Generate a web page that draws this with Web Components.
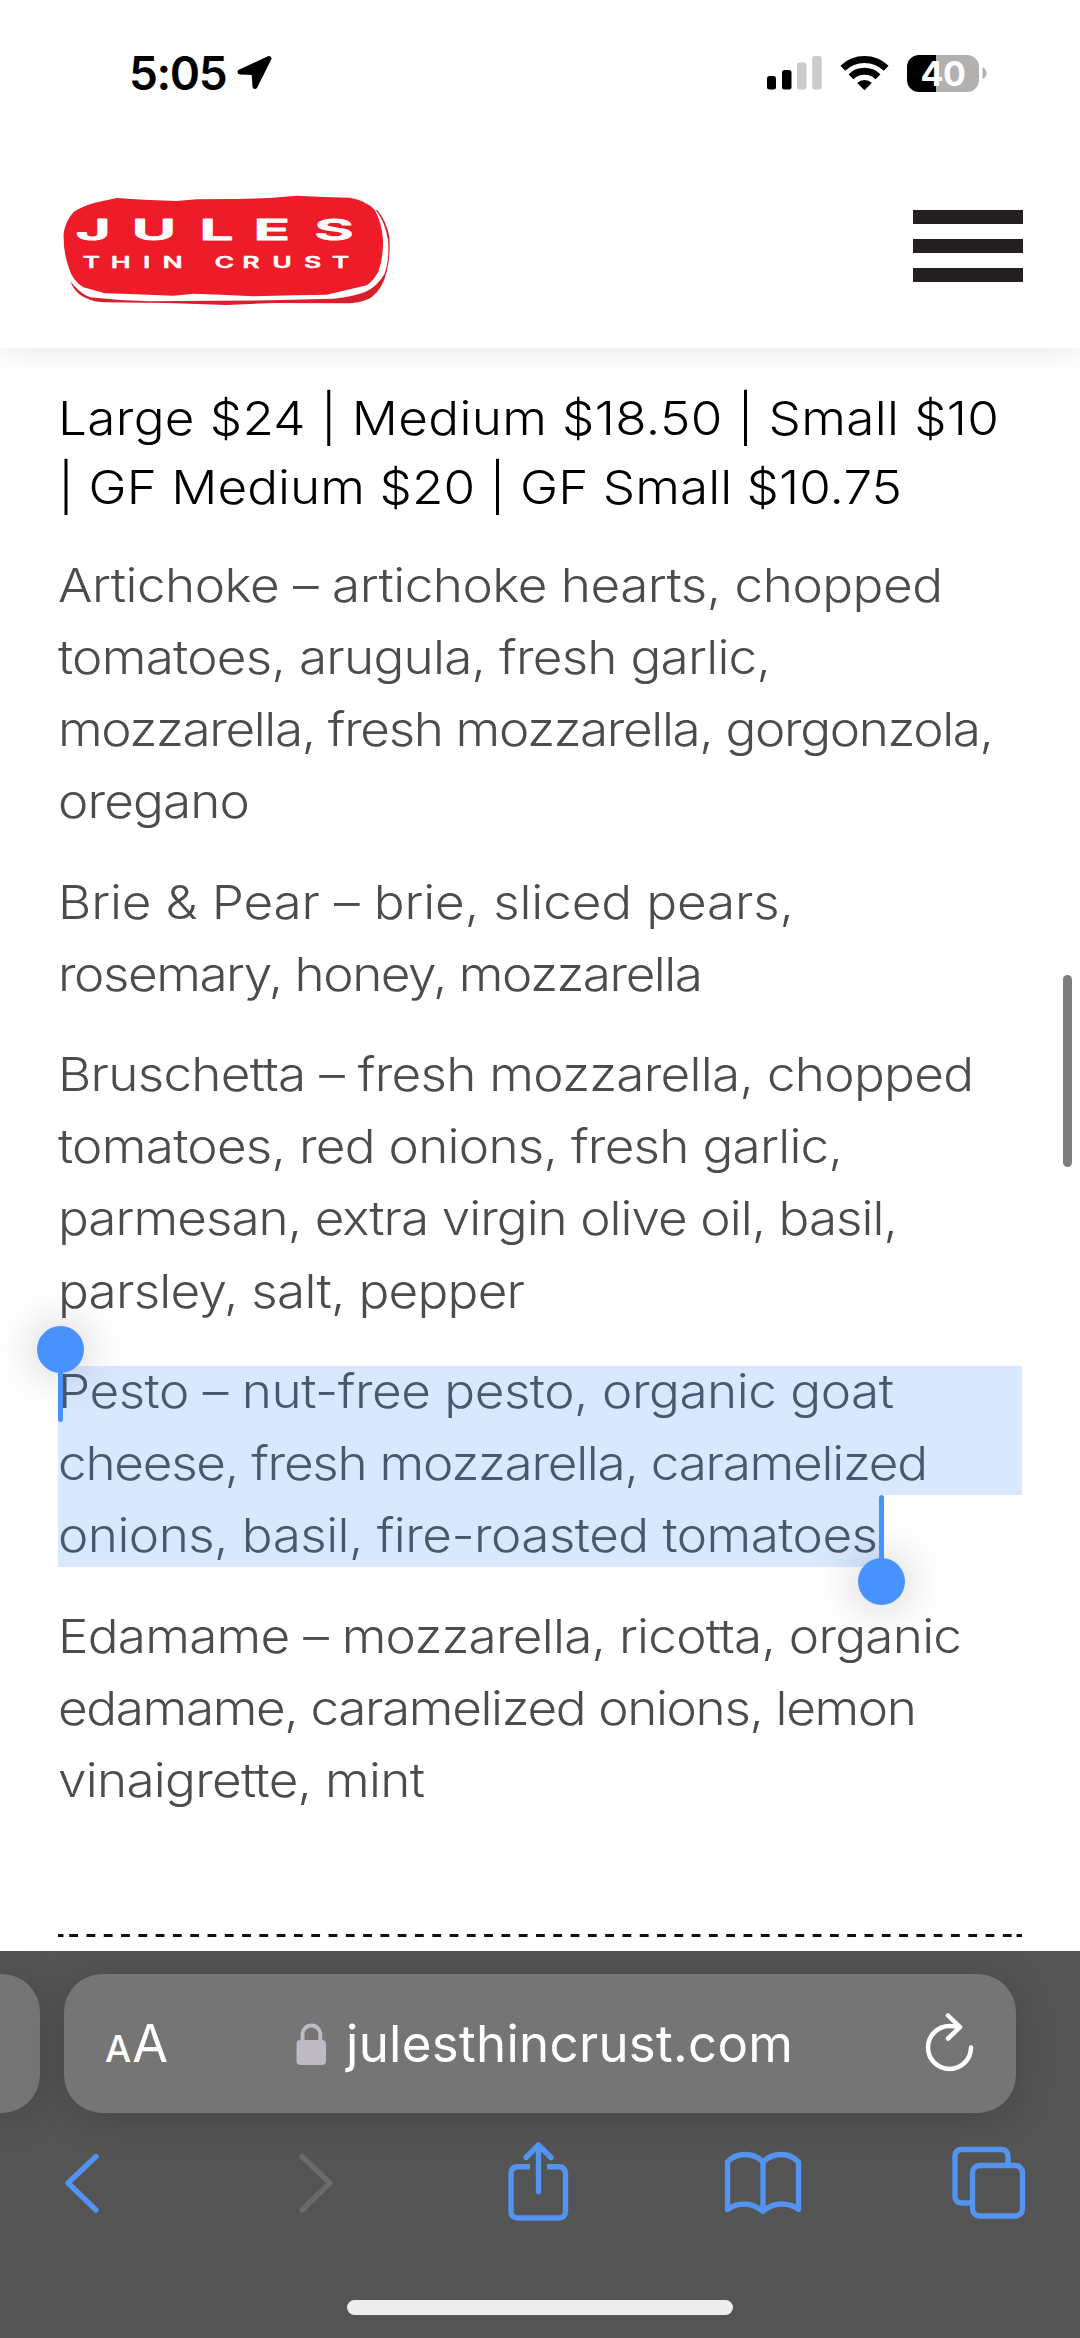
<!DOCTYPE html>
<html lang="en">
<head>
<meta charset="utf-8">
<title>Jules Thin Crust</title>
<style>
    body{
        margin: 0;
        width: 1080px;
        height: 2338px;
        overflow: hidden;
        background: #fff;
        font-family: Inter, "Liberation Sans", sans-serif;
    }
</style>
</head>
<body>
<phone-screen>
    <status-bar slot="top" time="5:05" battery="40"></status-bar>
    <site-header slot="top"></site-header>
    <menu-heading>
        <fit-line width="941" stretch="1.09">Large $24 | Medium $18.50 | Small $10</fit-line>
        <fit-line width="844" stretch="1.09">| GF Medium $20 | GF Small $10.75</fit-line>
    </menu-heading>
    <menu-item>
        <fit-line width="885" stretch="1.09">Artichoke – artichoke hearts, chopped</fit-line>
        <fit-line width="713" stretch="1.09">tomatoes, arugula, fresh garlic,</fit-line>
        <fit-line width="936" stretch="1.09">mozzarella, fresh mozzarella, gorgonzola,</fit-line>
        <fit-line width="192" stretch="1.09">oregano</fit-line>
    </menu-item>
    <menu-item>
        <fit-line width="736" stretch="1.09">Brie &amp; Pear – brie, sliced pears,</fit-line>
        <fit-line width="645" stretch="1.09">rosemary, honey, mozzarella</fit-line>
    </menu-item>
    <menu-item>
        <fit-line width="916" stretch="1.09">Bruschetta – fresh mozzarella, chopped</fit-line>
        <fit-line width="785" stretch="1.09">tomatoes, red onions, fresh garlic,</fit-line>
        <fit-line width="840" stretch="1.09">parmesan, extra virgin olive oil, basil,</fit-line>
        <fit-line width="467" stretch="1.09">parsley, salt, pepper</fit-line>
    </menu-item>
    <menu-item selected>
        <fit-line width="836" stretch="1.09">Pesto – nut-free pesto, organic goat</fit-line>
        <fit-line width="870" stretch="1.09">cheese, fresh mozzarella, caramelized</fit-line>
        <fit-line width="820" stretch="1.09">onions, basil, fire-roasted tomatoes</fit-line>
    </menu-item>
    <menu-item>
        <fit-line width="904" stretch="1.09">Edamame – mozzarella, ricotta, organic</fit-line>
        <fit-line width="859" stretch="1.09">edamame, caramelized onions, lemon</fit-line>
        <fit-line width="367" stretch="1.09">vinaigrette, mint</fit-line>
    </menu-item>
    <dashed-rule></dashed-rule>
    <browser-bar slot="bottom"><fit-line width="447">julesthincrust.com</fit-line></browser-bar>
</phone-screen>

<script>
class PhoneScreen extends HTMLElement{
    constructor(){
        super()
        this.attachShadow({mode: 'open'})
        this.shadowRoot.innerHTML = `
            <style>
                :host{
                    position: relative;
                    display: flex;
                    flex-direction: column;
                    width: 1080px;
                    height: 2338px;
                    overflow: hidden;
                }
                main{
                    flex: 1;
                    min-height: 0;
                    padding: 34.5px 58px 0;
                    overflow: hidden;
                }
                #scroll{
                    position: absolute;
                    top: 975px;
                    right: 8px;
                    width: 9px;
                    height: 192px;
                    border-radius: 5px;
                    background: #7f7f7f;
                }
            </style>
            <slot name="top"></slot>
            <main><slot></slot></main>
            <slot name="bottom"></slot>
            <div id="scroll"></div>
        `
    }
}

class StatusBar extends HTMLElement{
    constructor(){
        super()
        this.attachShadow({mode: 'open'})
        this.shadowRoot.innerHTML = `
            <style>
                :host{
                    display: flex;
                    justify-content: space-between;
                    align-items: flex-start;
                    box-sizing: border-box;
                    height: 150px;
                    padding: 46px 92px 0 129px;
                }
                div{
                    display: flex;
                    align-items: center;
                    height: 54px;
                }
                #time{
                    font-size: 46px;
                    font-weight: 600;
                    letter-spacing: -1.4px;
                    margin-right: 11px;
                }
                #wifi{ margin: 0 18px 0 18px; }
                #battery{
                    justify-content: center;
                    width: 72px;
                    height: 37px;
                    border-radius: 12px;
                    background: linear-gradient(90deg, #000 29px, #b1b1b1 29px);
                    color: #fff;
                    font-size: 34px;
                    font-weight: 700;
                    letter-spacing: -.5px;
                }
            </style>
            <div>
                <span id="time"></span>
                <svg width="36" height="36" viewBox="0 0 36 36"><path d="M32 3.500L18 31.500L17 17.500L3 17Z" stroke="#000" stroke-width="5" stroke-linejoin="round"/></svg>
            </div>
            <div>
                <svg width="55" height="36" viewBox="0 0 55 36">
                    <rect x="0" y="21" width="9" height="13.500" rx="2.500"/>
                    <rect x="15" y="15" width="9.500" height="19.500" rx="2.500"/>
                    <g fill="#cbcbcb"><rect x="30" y="7.500" width="9.500" height="27" rx="2.500"/><rect x="45.200" y="1" width="9.500" height="33.500" rx="2.500"/></g>
                </svg>
                <svg id="wifi" width="49" height="36" viewBox="0 0 49 36">
                    <g fill="none" stroke="#000" stroke-width="7">
                        <path d="M2.800 13.200a31.500 31.500 0 0 1 43.400 0"/>
                        <path d="M11 21.800a19.500 19.500 0 0 1 27 0"/>
                    </g>
                    <path d="M24.500 35.300l-7.300-7.400a10.800 10.800 0 0 1 14.600 0z"/>
                </svg>
                <div id="battery"></div>
                <svg width="9" height="14" viewBox="0 0 9 14"><path d="M3.500 1q4 2 4 6t-4 6z" fill="#b1b1b1"/></svg>
            </div>
        `
    }
    connectedCallback(){
        this.shadowRoot.querySelector('#time').textContent = this.getAttribute('time')
        this.shadowRoot.querySelector('#battery').textContent = this.getAttribute('battery')
    }
}

class SiteHeader extends HTMLElement{
    constructor(){
        super()
        this.attachShadow({mode: 'open'})
        this.shadowRoot.innerHTML = `
            <style>
                :host{
                    display: flex;
                    justify-content: space-between;
                    box-sizing: border-box;
                    height: 198px;
                    padding: 30px 57px 0 40px;
                    background: #fff;
                    box-shadow: 0 4px 28px rgba(0,0,0,.09);
                    clip-path: inset(0 0 -50px 0);
                }
                #burger{
                    display: flex;
                    flex-direction: column;
                    gap: 15px;
                    margin-top: 30px;
                }
                #burger i{
                    width: 110px;
                    height: 14px;
                    background: #231f20;
                }
                text{ font-weight: 600; }
            </style>
            <svg width="370" height="140" viewBox="0 0 1110 420">
                <path fill="#d81f2c" d="M1012 90Q1040 125 1048 170Q1052 230 1040 275Q1028 325 995 352Q975 366 930 370L700 369L560 375L380 369L190 367Q145 364 118 343Q98 325 92 305L500 200Z"/>
                <path fill="#fff" d="M1000 82Q1035 120 1044 180Q1049 240 1033 283Q1010 322 975 336Q940 350 880 356L690 361L520 362L330 364L240 360L150 352Q118 340 88 300L500 200Z"/>
                <path fill="#ee1c28" d="M100 97Q122 80 165 68L230 54L310 59L410 63L470 58L590 57L690 54L770 47L850 51L930 53Q980 63 1004 89Q1025 125 1029 180Q1030 235 1015 275Q1000 302 980 316L920 330L860 344L760 346L640 349L545 344L460 341L400 347L270 342L195 340L130 322Q98 303 87 265Q69 215 71 160Q76 125 100 97Z"/>
                <g fill="#fff" stroke="#fff" stroke-linejoin="round">
                    <g stroke-width="3" transform="translate(0 179) scale(2.1 1)"><text font-size="86" x="51 131 228 305 392">JULES</text></g>
                    <g stroke-width="1" transform="translate(0 264) scale(1.7 1)"><text font-size="47" x="75 125 182 216 260 308 357 410 466 515">THIN CRUST</text></g>
                </g>
            </svg>
            <div id="burger"><i></i><i></i><i></i></div>
        `
    }
}

// one line of text: glyphs widened by "stretch", then tracked out to "width"
class FitLine extends HTMLElement{
    constructor(){
        super()
        this.attachShadow({mode: 'open'})
        this.shadowRoot.innerHTML = `
            <style>
                :host{
                    display: block;
                    white-space: nowrap;
                }
                span{
                    display: inline-block;
                    vertical-align: top;
                    transform-origin: 0 0;
                }
            </style>
            <span><slot></slot></span>
        `
    }
    connectedCallback(){
        const span = this.shadowRoot.querySelector('span')
        const stretch = Number(this.getAttribute('stretch') || 1)
        const room = Number(this.getAttribute('width')) / stretch - span.getBoundingClientRect().width
        span.style.letterSpacing = room / (this.textContent.length - 1) + 'px'
        if(stretch != 1){
            span.style.transform = `scaleX(${stretch})`
        }
    }
}

class MenuHeading extends HTMLElement{
    constructor(){
        super()
        this.attachShadow({mode: 'open'})
        this.shadowRoot.innerHTML = `
            <style>
                :host{
                    display: block;
                    margin-bottom: 27.5px;
                    color: #000;
                    font-size: 47px;
                    font-weight: 300;
                    line-height: 69.4px;
                }
            </style>
            <slot></slot>
        `
    }
}

class MenuItem extends HTMLElement{
    constructor(){
        super()
        this.attachShadow({mode: 'open'})
        this.shadowRoot.innerHTML = `
            <style>
                :host{
                    position: relative;
                    display: block;
                    margin-bottom: 28.2px;
                    color: #4c4c4c;
                    font-size: 47px;
                    font-weight: 300;
                    line-height: 72.15px;
                }
                :host([selected]){
                    color: #475872;
                    background:
                        linear-gradient(#dae8ff, #dae8ff) 0 11px / 964px 129px no-repeat,
                        linear-gradient(#dae8ff, #dae8ff) 0 139px / 821px 73px no-repeat;
                }
                .grip{
                    display: none;
                    position: absolute;
                    width: 47px;
                    height: 47px;
                    border-radius: 50%;
                    background: #4892fd;
                    box-shadow: 0 0 48px rgba(0,0,0,.26);
                }
                .grip::after{
                    content: "";
                    position: absolute;
                    left: 21px;
                    width: 5.500px;
                    border-radius: 3px;
                    background: #4892fd;
                }
                :host([selected]) .grip{ display: block; }
                #start{ left: -21.500px; top: -28.500px; }
                #start::after{ top: 40px; height: 56px; }
                #end{ left: 799.500px; top: 203.500px; }
                #end::after{ bottom: 40px; height: 70px; }
            </style>
            <slot></slot>
            <div class="grip" id="start"></div>
            <div class="grip" id="end"></div>
        `
    }
}

class DashedRule extends HTMLElement{
    constructor(){
        super()
        this.attachShadow({mode: 'open'})
        this.shadowRoot.innerHTML = `
            <style>
                :host{ display: block; margin-top: 118px; }
                svg{ display: block; }
            </style>
            <svg width="964" height="3" viewBox="0 0 964 3" stroke="#111" stroke-width="3">
                <path d="M0 1.500H5.500M958.500 1.500H964"/>
                <path d="M11.200 1.500H954" stroke-dasharray="8.800 8.490"/>
            </svg>
        `
    }
}

class BrowserBar extends HTMLElement{
    constructor(){
        super()
        this.attachShadow({mode: 'open'})
        this.shadowRoot.innerHTML = `
            <style>
                :host{
                    position: relative;
                    display: flex;
                    flex-direction: column;
                    align-items: center;
                    box-sizing: border-box;
                    height: 387px;
                    padding-top: 23px;
                    overflow: hidden;
                    background: #545454;
                    color: #fff;
                }
                #tabs{
                    display: flex;
                    gap: 24px;
                    width: 100%;
                }
                .tab{
                    display: flex;
                    align-items: center;
                    box-sizing: border-box;
                    width: 952px;
                    height: 139px;
                    padding: 0 39px 0 41px;
                    border-radius: 38px;
                    background: #757575;
                    box-shadow: 0 6px 36px rgba(0,0,0,.17);
                }
                .tab:first-child{
                    width: 40px;
                    padding: 0;
                    border-radius: 0 38px 38px 0;
                }
                #aa{
                    width: 191px;
                    font-size: 37px;
                    font-weight: 500;
                }
                #aa b{ font-size: 52px; font-weight: 400; margin-left: 1px; }
                #url{
                    width: 444px;
                    margin-left: 19px;
                    font-size: 51px;
                    line-height: 62px;
                }
                #reload{ margin: -4px 0 0 auto; }
                #tools{
                    display: flex;
                    justify-content: space-between;
                    box-sizing: border-box;
                    width: 100%;
                    padding: 23px 51px 0 42px;
                    color: #5394f1;
                }
                #tools svg{
                    fill: none;
                    stroke: currentColor;
                    stroke-width: 5.400;
                    stroke-linecap: round;
                    stroke-linejoin: round;
                }
                #tools .off{ color: #6b6b6b; }
                #home{
                    width: 386px;
                    height: 15px;
                    margin-top: 74px;
                    border-radius: 8px;
                    background: #ededed;
                }
            </style>
            <div id="tabs">
                <div class="tab"></div>
                <div class="tab">
                    <span id="aa">A<b>A</b></span>
                    <svg width="31" height="42" viewBox="0 0 31 42"><rect x=".5" y="17" width="29.500" height="25" rx="4" fill="#bdbac3"/><path d="M6.500 18v-6.500a8.900 9 0 0 1 17.800 0V18" fill="none" stroke="#bdbac3" stroke-width="4"/></svg>
                    <div id="url"><slot></slot></div>
                    <svg id="reload" width="52" height="62" viewBox="0 0 52 62" fill="none" stroke="#fff" stroke-width="4.500" stroke-linecap="round" stroke-linejoin="round"><path d="M46 36.500a21.500 21.500 0 1 1-21.500-21.500q5 0 10 1.500M23 4.500L35 16.200L23 27.500"/></svg>
                </div>
            </div>
            <div id="tools">
                <svg width="80" height="90" viewBox="0 0 80 90"><path d="M54 20.500L26 47L54 74"/></svg>
                <svg class="off" width="80" height="90" viewBox="0 0 80 90"><path d="M33 20.500L61 47L33 74"/></svg>
                <svg width="80" height="90" viewBox="-2.500 0 80 90"><path stroke-linecap="butt" style="stroke-linecap:butt" d="M31.500 30.800H19.500q-7 0-7 7V75q0 7 7 7H60q7 0 7-7V37.800q0-7-7-7H48.500"/><path d="M40 55.500V10M27.500 21.500L40 9L52.500 21.500"/></svg>
                <svg width="80" height="90" viewBox="-1 0 80 90"><path d="M40 26q-7-7.500-18-7.500T4.500 26V73.500q7-5.500 17-5.500t18.500 7.500q8-7.500 18.500-7.500t17 5.500V26q-7-7.500-17.500-7.500T40 26V75"/></svg>
                <svg width="80" height="90" viewBox="0 0 80 90"><path d="M59 28V20.500q0-7-7-7H13q-7 0-7 7V60q0 7 7 7h9"/><rect x="23.500" y="29.500" width="50" height="50.500" rx="7"/></svg>
            </div>
            <div id="home"></div>
        `
    }
}

customElements.define('phone-screen', PhoneScreen)
customElements.define('status-bar', StatusBar)
customElements.define('site-header', SiteHeader)
customElements.define('menu-heading', MenuHeading)
customElements.define('menu-item', MenuItem)
customElements.define('dashed-rule', DashedRule)
customElements.define('browser-bar', BrowserBar)
// last, so that the lines are measured in the font of their parents
customElements.define('fit-line', FitLine)
</script>
</body>
</html>
